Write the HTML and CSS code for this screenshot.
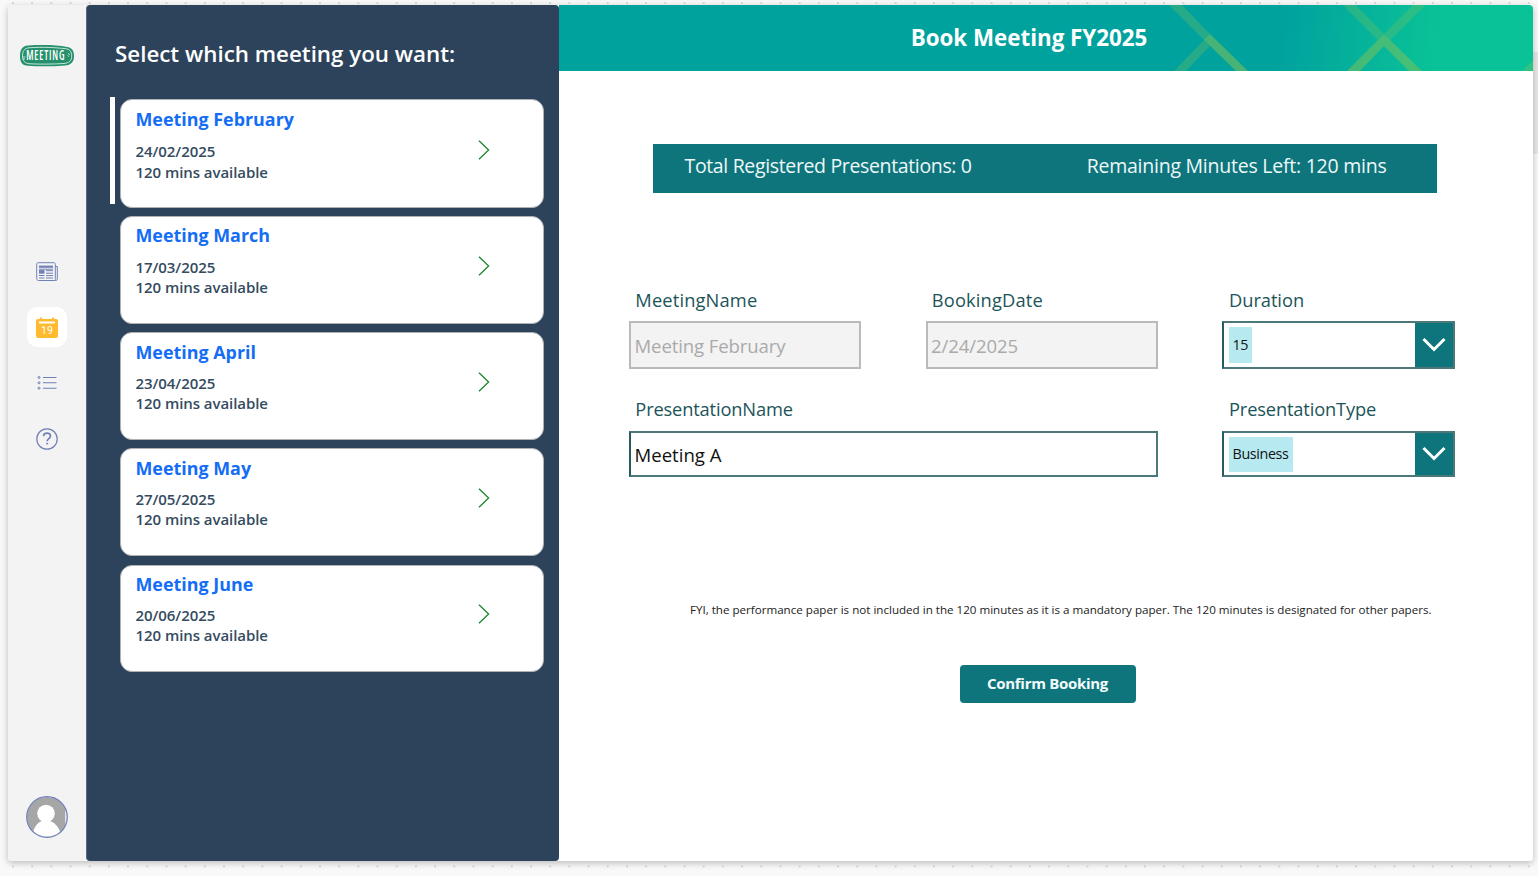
FILE: index.html
```html
<!DOCTYPE html>
<html lang="en">
<head>
<meta charset="utf-8">
<title>Book Meeting FY2025</title>
<link rel="stylesheet" href="styles.css">
</head>
<body>
<div class="app">
  <nav class="rail">
    <svg class="logo" width="56" height="24" viewBox="0 0 56 24">
      <path d="M9 1.500C24 .5 38 1 48 3c5 .6 7 4 7 9 0 6-3 9-9 9.500-12 1-25 1.200-37 .3C3 21.500 1 18 1 12 1 6 3 2 9 1.500Z" fill="#26906d"/>
      <path d="M10 3.800C24 2.600 38 3.800 46 4.600c5 .5 6.700 3 6.700 7.400 0 4.700-2.500 7-7.700 7.500-11 .7-24 .8-34 .3-5.500-.4-7.500-3-7.500-7.800 0-5 2-7.800 6.500-8.200Z" fill="none" stroke="#d8ede5" stroke-width=".9"/>
      <g transform="translate(7.200 16.300) scale(.73 1)"><text>MEETING</text></g>
      <path d="M4 13h2.500M4 15h2M49 9l2 2M48.500 11.500l1.500 1" stroke="#fff" stroke-width=".7"/>
    </svg>
    <div class="menu">
      <a class="item"><svg width="22" height="20" viewBox="0 0 22 20" fill="none" stroke="#7180b6"><path d="M19.500 4.500h1.800v12.300c0 1-.8 1.700-1.800 1.700H2.500C1.200 18.500.7 17.500.7 16.500V2.200c0-.9.600-1.500 1.500-1.500h15.600c.9 0 1.500.6 1.500 1.500v14.500c0 1 .4 1.700 1 1.700"/><path d="M3 4.700h14" stroke-width="2.200"/><path d="M3 7.200h14M3 13.500h5.500M3 16h5.500M10 8.700h7M10 11.200h7M10 13.600h7M10 16h7" stroke-width="1"/><path d="M3 9.900h5.500" stroke-width="3.600"/></svg></a>
      <a class="item active"><svg width="22" height="21" viewBox="0 0 22 21"><path d="M4 2V.5h2V2h10V.5h2V2h2q2 0 2 2v15q0 2-2 2H2q-2 0-2-2V4q0-2 2-2Z" fill="#ffba2d"/><path d="M3 4.500h16v2H3z" fill="#fff"/><text class="day" x="11" y="16.700" text-anchor="middle">19</text></svg></a>
      <a class="item"><svg width="20" height="16" viewBox="0 0 20 16" fill="none" stroke="#7180b6"><path d="M6 2.500h13.500M6 7.800h13.500M6 13.200h13.500" stroke-width="1.100"/><circle cx="2" cy="2.500" r="1"/><circle cx="2" cy="7.800" r="1"/><circle cx="2" cy="13.200" r="1"/></svg></a>
      <a class="item"><svg width="22" height="22" viewBox="0 0 22 22" fill="none" stroke="#7180b6"><circle cx="11" cy="11" r="10.200" stroke-width="1.200"/><path d="M7.600 8.300C7.600 3.900 14.500 4.100 14.500 8c0 2.500-3.400 2.700-3.400 5.300" stroke-width="1.700"/><circle cx="11.100" cy="15.600" r=".6" fill="#7180b6"/></svg></a>
    </div>
    <svg class="avatar" width="42" height="42" viewBox="0 0 42 42"><defs><clipPath id="face"><circle cx="21" cy="21" r="19.800"/></clipPath></defs><circle cx="21" cy="21" r="20" fill="#a6a6a6"/><g clip-path="url(#face)" fill="#fff"><circle cx="20" cy="17.500" r="8.800"/><path d="M7 41V36C9 29 13.500 25.500 16.500 25h7c4 1 9 5 10.500 11v5Z"/><path d="M39.300 10h2v22h-2z"/></g><circle cx="21" cy="21" r="20.300" fill="none" stroke="#6c7db9" stroke-width="1.200"/></svg>
  </nav>
  <aside class="panel">
    <h2 class="panel-title">Select which meeting you want:</h2>
    <div class="cards">
      <article class="card selected"><div><h3>Meeting February</h3><p>24/02/2025</p><p>120 mins available</p></div><svg class="chevron" width="12" height="20" viewBox="0 0 12 20"><path d="M1 .7 10.600 10 1 19.300"/></svg></article>
      <article class="card"><div><h3>Meeting March</h3><p>17/03/2025</p><p>120 mins available</p></div><svg class="chevron" width="12" height="20" viewBox="0 0 12 20"><path d="M1 .7 10.600 10 1 19.300"/></svg></article>
      <article class="card"><div><h3>Meeting April</h3><p>23/04/2025</p><p>120 mins available</p></div><svg class="chevron" width="12" height="20" viewBox="0 0 12 20"><path d="M1 .7 10.600 10 1 19.300"/></svg></article>
      <article class="card"><div><h3>Meeting May</h3><p>27/05/2025</p><p>120 mins available</p></div><svg class="chevron" width="12" height="20" viewBox="0 0 12 20"><path d="M1 .7 10.600 10 1 19.300"/></svg></article>
      <article class="card"><div><h3>Meeting June</h3><p>20/06/2025</p><p>120 mins available</p></div><svg class="chevron" width="12" height="20" viewBox="0 0 12 20"><path d="M1 .7 10.600 10 1 19.300"/></svg></article>
    </div>
  </aside>
  <main class="main">
    <header class="header">
      <svg class="pattern" width="408" height="66" viewBox="0 0 408 66">
        <g fill="#84c255">
          <path opacity=".29" d="M39 0h13l28 29-6 6ZM44 66h12l24-25-6-6Z"/>
          <path opacity=".54" d="M74 35l6-6 38 37h-12Z"/>
          <path opacity=".28" d="M213 0h13l28 29-6 6ZM283 0h13l-36 35-6-6Z"/>
          <path opacity=".5" d="M248 35l6-6 38 37h-13l-25-25-24 25h-13Z"/>
          <path opacity=".3" d="M392 66l16-16v16Z"/>
        </g>
      </svg>
      <h1>Book Meeting FY2025</h1>
    </header>
    <section class="summary"><span class="total">Total Registered Presentations: 0</span><span class="left">Remaining Minutes Left: 120 mins</span></section>
    <form class="form">
      <div class="field"><label class="l-name">MeetingName</label><div class="box disabled"><span>Meeting February</span></div></div>
      <div class="field"><label class="l-date">BookingDate</label><div class="box disabled"><span>2/24/2025</span></div></div>
      <div class="field"><label class="l-dur">Duration</label><div class="box select"><span class="chip">15</span><span class="arrow"><svg width="24" height="16" viewBox="0 0 24 16"><path d="m1.500 2 10.500 10.500L22.500 2"/></svg></span></div></div>
      <div class="field wide"><label>PresentationName</label><div class="box"><span>Meeting A</span></div></div>
      <div class="field"><label class="l-type">PresentationType</label><div class="box select"><span class="chip">Business</span><span class="arrow"><svg width="24" height="16" viewBox="0 0 24 16"><path d="m1.500 2 10.500 10.500L22.500 2"/></svg></span></div></div>
    </form>
    <p class="note">FYI, the performance paper is not included in the 120 minutes as it is a mandatory paper. The 120 minutes is designated for other papers.</p>
    <button class="confirm">Confirm Booking</button>
  </main>
</div>
</body>
</html>
```
FILE: styles.css
```css
* { box-sizing: border-box; }
body {
  margin: 0; height: 876px; padding: 5px 5px 15px 8px; overflow: hidden;
  background: radial-gradient(circle at 1px 1px, #d9d9d9 1.1px, transparent 1.3px) 12px 2px / 19.2px 19.2px, linear-gradient(#e8e8e8, #e8e8e8) 1533px 52px / 5px 102px no-repeat, #f9f9f9;
  font-family: "Open Sans", "Noto Sans", sans-serif;
}
h1, h2, h3, p { margin: 0; }
.app { display: flex; height: 856px; border-radius: 4px; box-shadow: 0 2px 7px rgba(0,0,0,.25); }
.rail { width: 78px; background: #f3f3f3; border-radius: 4px; display: flex; flex-direction: column; align-items: center; padding: 38.500px 0 23px; }
.logo { overflow: visible; }
.logo text { font: 600 13.500px "Open Sans", sans-serif; font-stretch: 75%; letter-spacing: 1.200px; fill: #fff; }
.menu { display: flex; flex-direction: column; gap: 15.700px; margin-top: 184px; }
.item { width: 40px; height: 40px; display: flex; align-items: center; justify-content: center; border-radius: 11px; }
.active { background: #fff; }
.day { font: 400 10.500px Roboto, sans-serif; fill: #fff; }
.avatar { margin-top: auto; }
.panel { width: 473px; background: #2c435b; border-radius: 4px; border-left: 1px solid #526a7a; padding: 33px 15px 0 28px; }
.panel-title { color: #fff; font-size: 22.350px; line-height: 32px; font-weight: 600; }
.cards { display: flex; flex-direction: column; gap: 8.500px; margin: 29.400px 0 0 5px; }
.card { position: relative; height: 107.700px; background: #fff; border: 1px solid #aeb2b5; border-radius: 12px; padding: 5px 53px 0 14.500px; display: flex; justify-content: space-between; }
.card h3 { color: #146df5; font-size: 17.900px; line-height: 26px; font-weight: 700; margin-bottom: 9px; }
.card p { color: #344b60; font-size: 15px; line-height: 20px; font-weight: 600; letter-spacing: -.06px; }
.selected { height: 109px; margin-bottom: -.8px; padding-top: 6px; }
.selected p + p { margin-top: 1px; }
.selected::before { content: ""; position: absolute; left: -11px; top: -3px; width: 5px; height: 107px; background: #fff; }
.card:nth-child(3) h3, .card:nth-child(4) h3 { padding-top: 1px; margin-bottom: 8px; }
.card:nth-child(5) h3 { margin-bottom: 8px; }
.chevron { margin-top: 33.500px; fill: none; stroke: #1c852a; stroke-width: 1.300; }
.main { flex: 1; background: #fff; border-radius: 4px; display: flex; flex-direction: column; }
.header { position: relative; height: 66px; background: linear-gradient(97deg, #00a29e 74%, #0ac297 90%); border-radius: 0 4px 0 0; overflow: hidden; display: flex; justify-content: center; }
.pattern { position: absolute; right: -5px; top: 0; }
.header h1 { position: relative; margin-right: 34px; padding-top: 16px; color: #fff; font-size: 22.350px; line-height: 33px; font-weight: 700; }
.summary { margin: 73px 96px 0 93.500px; height: 49px; padding: 8px 51px 0 32px; background: #0f757d; color: #edf8f8; display: flex; justify-content: space-between; font-size: 19.500px; line-height: 28px; white-space: nowrap; }
.total { letter-spacing: -.35px; }
.left { letter-spacing: -.24px; margin-right: -.5px; }
.form { margin: 93px 78px 0 70px; display: grid; grid-template-columns: 232px 232px 233px; column-gap: 64.500px; row-gap: 26px; }
.field { display: flex; flex-direction: column; }
.wide { grid-column: span 2; }
.field label { height: 35px; padding-left: 6.300px; font-size: 18.300px; line-height: 28px; color: #1d5459; letter-spacing: -.16px; }
.field .l-name, .field .l-date { letter-spacing: .15px; }
.field .l-dur { letter-spacing: -.05px; }
.field .l-dur, .field .l-type { padding-left: 7px; }
.box { height: 48px; border: 2px solid #4d787a; border-left-color: #275b5e; padding: 0 0 0 4px; display: flex; align-items: center; font-size: 18.600px; color: #111; }
.box > span:first-child { margin-left: -.5px; }
.disabled span { letter-spacing: -.12px; }
.wide .box, .wide + .field .box { height: 46px; margin-top: 1px; }
.disabled { background: #f3f3f3; color: #aaa; border: 2px solid #bababa; padding: 0 0 0 4px; }
.select { padding: 0 0 0 5px; justify-content: space-between; }
.box > .chip { margin-left: 0; background: #b7eaf0; padding: 0 4px; height: 36px; line-height: 36px; font-size: 14.300px; letter-spacing: -.35px; }
.wide + .field .chip { height: 35px; line-height: 34px; }
.arrow { width: 38px; align-self: stretch; background: #0f757d; display: flex; align-items: center; justify-content: center; }
.arrow svg { fill: none; stroke: #fff; stroke-width: 3; margin-bottom: 1px; }
.note { margin: 124px 0 0 131px; font-size: 11.600px; line-height: 18px; color: #222; white-space: nowrap; }
.confirm { margin: 46px 0 0 400.500px; width: 176px; height: 38px; padding-bottom: 3px; border: 0; border-radius: 4px; background: #0f757d; color: #f4fbfb; font: 700 15px "Open Sans", sans-serif; letter-spacing: -.3px; }
```
